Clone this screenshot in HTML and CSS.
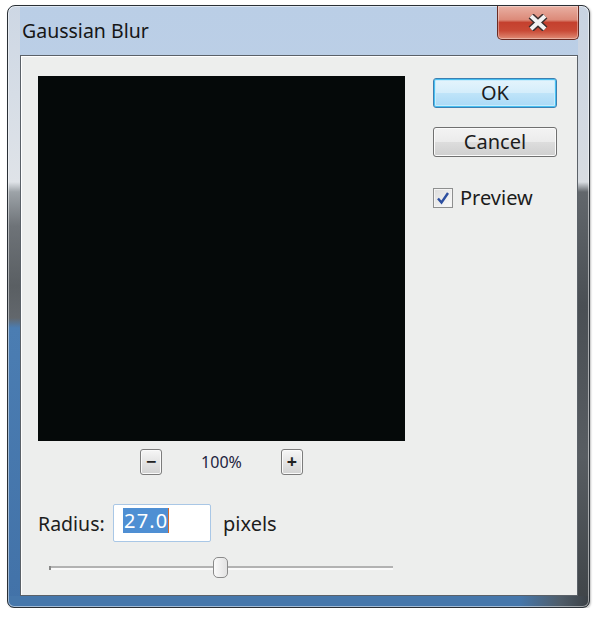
FILE: index.html
```html
<!DOCTYPE html>
<html lang="en">
<head>
  <meta charset="UTF-8">
  <meta name="viewport" content="width=device-width, initial-scale=1.0">
  <title>Gaussian Blur</title>
  <link rel="stylesheet" href="styles.css">
</head>
<body>
  <div class="window">
    <div class="titlebar">
      <span class="title">Gaussian Blur</span>
      <div class="close-btn">
        <svg width="20" height="17" viewBox="0 0 20 17">
          <path d="M3 2 L17 15 M17 2 L3 15" stroke="#3a2e2e" stroke-width="7" fill="none"/>
          <path d="M3 2 L17 15 M17 2 L3 15" stroke="#f2f2f2" stroke-width="4" fill="none"/>
        </svg>
      </div>
    </div>

    <div class="client">
      <div class="main-row">
        <div class="preview-col">
          <div class="preview"></div>
          <div class="zoom-row">
            <div class="zoom-btn">&minus;</div>
            <span class="zoom-value">100%</span>
            <div class="zoom-btn">+</div>
          </div>
        </div>

        <div class="actions">
          <div class="btn btn-default">OK</div>
          <div class="btn">Cancel</div>
          <label class="check">
            <span class="check-box">
              <svg width="14" height="14" viewBox="0 0 14 14">
                <path d="M2 7.5 L5.5 11.5 L12 2" stroke="#2d4fa0" stroke-width="2.4" fill="none"/>
              </svg>
            </span>
            Preview
          </label>
        </div>
      </div>

      <div class="radius-row">
        <span class="radius-label">Radius:</span>
        <div class="field"><span class="sel">27.0</span><span class="caret"></span></div>
        <span class="unit">pixels</span>
      </div>

      <div class="slider">
        <div class="track"></div>
        <div class="thumb" style="left: 164px"></div>
      </div>
    </div>
  </div>
</body>
</html>
```

FILE: styles.css
```css
body {
  margin: 0;
  background: #fff;
  font-family: "Noto Sans", "DejaVu Sans", sans-serif;
  color: #1c1c1c;
}

.window {
  box-sizing: border-box;
  width: 583px;
  height: 603px;
  margin: 5px 0 0 7px;
  padding: 0 11px 11px 12px;
  border: 1px solid #2a3036;
  border-radius: 8px 8px 7px 7px;
  display: flex;
  flex-direction: column;
  box-shadow: inset 0 0 0 1px rgba(255, 255, 255, 0.5), 1px 1px 2px rgba(0, 0, 0, 0.25);
  background:
    linear-gradient(to right, #4677ab 0, #4677ab 88%, #4f5d6a 95%, #3c4146 100%) left bottom / 100% 11px no-repeat,
    linear-gradient(to bottom, #cdd7e4 0, #dfe3e8 176px, #9da3a8 186px, #6e7378 220px, #5a5f63 280px, #62676c 312px, #4b7db2 322px, #4272a8 100%) left top / 12px 100% no-repeat,
    linear-gradient(to bottom, #c8d3e2 0, #d8dce1 176px, #62676c 186px, #4a4f54 300px, #585d62 450px, #3f4448 100%) right top / 11px 100% no-repeat,
    linear-gradient(to bottom, #bacee6, #c7d6e8);
}

.titlebar {
  height: 49px;
  display: flex;
  justify-content: space-between;
  align-items: flex-start;
}

.title {
  margin: 12px 0 0 2px;
  font-size: 19.5px;
  line-height: 26px;
  color: #161616;
}

.close-btn {
  box-sizing: border-box;
  width: 82px;
  height: 34px;
  margin-right: -1px;
  border: 1px solid #6a2b22;
  border-top: none;
  border-radius: 0 0 5px 5px;
  display: flex;
  align-items: center;
  justify-content: center;
  background: linear-gradient(to bottom, #e9b0a3 0, #dc8a79 42%, #c4402e 50%, #c94a36 75%, #e08b74 100%);
  box-shadow: inset 0 0 0 1px rgba(255, 255, 255, 0.35);
}

.client {
  flex: 1;
  border: 1px solid #5b6168;
  background: #edeeed;
  box-shadow: inset 1px 1px 0 #fff;
  padding: 20px 0 0 17px;
}

.main-row {
  display: flex;
}

.preview {
  width: 367px;
  height: 365px;
  background: #050909;
}

.zoom-row {
  display: flex;
  justify-content: center;
  align-items: center;
  gap: 39px;
  margin-top: 8px;
  height: 26px;
}

.zoom-btn {
  box-sizing: border-box;
  width: 22px;
  height: 26px;
  border: 1px solid #7c7c7c;
  border-radius: 3px;
  background: linear-gradient(to bottom, #f6f6f6, #e4e4e4 50%, #d2d2d2);
  box-shadow: inset 0 0 0 1px #fafafa;
  font-size: 18px;
  font-weight: bold;
  line-height: 22px;
  text-align: center;
  color: #222;
}

.zoom-value {
  font-size: 16px;
  color: #1d2440;
}

.actions {
  margin: 2px 0 0 28px;
  display: flex;
  flex-direction: column;
  gap: 19px;
}

.btn {
  box-sizing: border-box;
  width: 124px;
  height: 30px;
  border: 1px solid #707070;
  border-radius: 3px;
  background: linear-gradient(to bottom, #f3f3f3 0, #ebebeb 50%, #dddddd 51%, #cfcfcf 100%);
  box-shadow: inset 0 0 0 1px #fbfbfb;
  font-size: 20px;
  line-height: 27px;
  text-align: center;
}

.btn-default {
  border-color: #3c7fb1;
  background: linear-gradient(to bottom, #e5f4fc 0, #d4edfb 50%, #bfe4f9 51%, #a9d9f6 100%);
  box-shadow: inset 0 0 0 1px #48c0f2, inset 0 0 0 2px #c8ecfc;
}

.check {
  display: flex;
  align-items: center;
  gap: 7px;
  margin-top: 8px;
  font-size: 20px;
}

.check-box {
  box-sizing: border-box;
  width: 20px;
  height: 20px;
  border: 1px solid #8e8f8f;
  background: linear-gradient(to bottom right, #dcdcdc, #fbfbfb);
  box-shadow: inset 0 0 0 1px #f4f4f4;
  display: flex;
  align-items: center;
  justify-content: center;
}

.radius-row {
  display: flex;
  align-items: center;
  margin-top: 29px;
  height: 38px;
}

.radius-label {
  font-size: 19.5px;
  width: 75px;
}

.field {
  box-sizing: border-box;
  width: 98px;
  height: 38px;
  border: 1px solid #a9c7e6;
  border-radius: 2px;
  background: #fff;
  padding: 3px 0 0 9px;
  display: flex;
  align-items: flex-start;
}

.sel {
  background: #4f8fd3;
  color: #fff;
  font-size: 20px;
  line-height: 25px;
  letter-spacing: 1.2px;
  padding-left: 1px;
}

.caret {
  width: 1px;
  height: 25px;
  background: #d86a2a;
}

.unit {
  margin-left: 12px;
  font-size: 20px;
}

.slider {
  position: relative;
  width: 344px;
  height: 21px;
  margin: 15px 0 0 11px;
}

.track {
  position: absolute;
  left: 0;
  right: 0;
  top: 9px;
  height: 4px;
  background: linear-gradient(to bottom, #b2b2b2 0, #b2b2b2 50%, #fafafa 51%);
  border-left: 2px solid #888;
}

.thumb {
  position: absolute;
  top: 0;
  box-sizing: border-box;
  width: 15px;
  height: 21px;
  border: 1px solid #8a8a8a;
  border-radius: 5px;
  background: linear-gradient(to right, #fafafa, #e2e2e2);
}
```
